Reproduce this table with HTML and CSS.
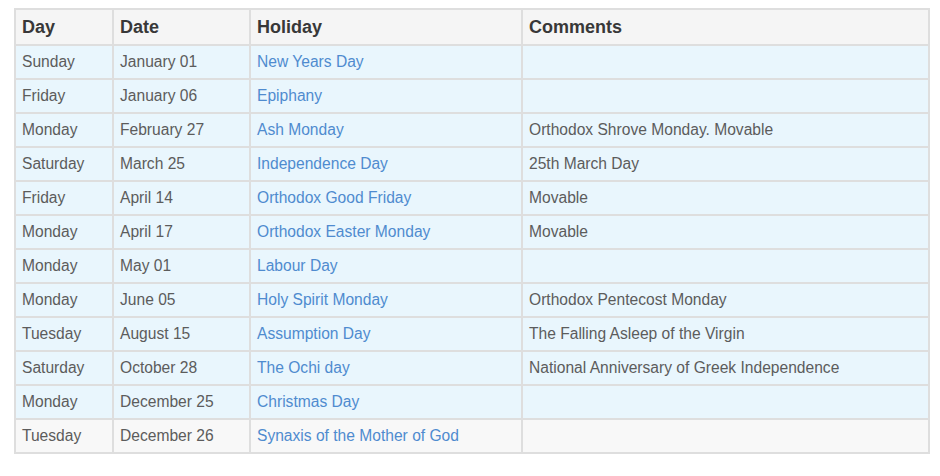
FILE: index.html
```html
<!DOCTYPE html>
<html>
<head>
<meta charset="utf-8">
<link rel="stylesheet" href="styles.css">
</head>
<body>
<table class="holidays">
  <colgroup>
    <col class="c-day"><col class="c-date"><col class="c-hol"><col class="c-com">
  </colgroup>
  <thead>
    <tr><th>Day</th><th>Date</th><th>Holiday</th><th>Comments</th></tr>
  </thead>
  <tbody>
    <tr><td>Sunday</td><td>January 01</td><td><a href="#">New Years Day</a></td><td></td></tr>
    <tr><td>Friday</td><td>January 06</td><td><a href="#">Epiphany</a></td><td></td></tr>
    <tr><td>Monday</td><td>February 27</td><td><a href="#">Ash Monday</a></td><td>Orthodox Shrove Monday. Movable</td></tr>
    <tr><td>Saturday</td><td>March 25</td><td><a href="#">Independence Day</a></td><td>25th March Day</td></tr>
    <tr><td>Friday</td><td>April 14</td><td><a href="#">Orthodox Good Friday</a></td><td>Movable</td></tr>
    <tr><td>Monday</td><td>April 17</td><td><a href="#">Orthodox Easter Monday</a></td><td>Movable</td></tr>
    <tr><td>Monday</td><td>May 01</td><td><a href="#">Labour Day</a></td><td></td></tr>
    <tr><td>Monday</td><td>June 05</td><td><a href="#">Holy Spirit Monday</a></td><td>Orthodox Pentecost Monday</td></tr>
    <tr><td>Tuesday</td><td>August 15</td><td><a href="#">Assumption Day</a></td><td>The Falling Asleep of the Virgin</td></tr>
    <tr><td>Saturday</td><td>October 28</td><td><a href="#">The Ochi day</a></td><td>National Anniversary of Greek Independence</td></tr>
    <tr><td>Monday</td><td>December 25</td><td><a href="#">Christmas Day</a></td><td></td></tr>
    <tr class="past"><td>Tuesday</td><td>December 26</td><td><a href="#">Synaxis of the Mother of God</a></td><td></td></tr>
  </tbody>
</table>
</body>
</html>
```
FILE: styles.css
```css
html, body {
  margin: 0;
  padding: 0;
  background: #ffffff;
}
body {
  padding: 8px 0 0 14px;
  font-family: "Liberation Sans", Arial, sans-serif;
}
.holidays {
  border-collapse: collapse;
  width: 914px;
  table-layout: fixed;
  border: 2px solid #dedede;
}
.c-day { width: 98px; }
.c-date { width: 137px; }
.c-hol { width: 272px; }
.c-com { width: 407px; }
.holidays th,
.holidays td {
  border: 2px solid #dedede;
  height: 34px;
  padding: 0 6px;
  text-align: left;
  vertical-align: middle;
  white-space: nowrap;
  box-sizing: border-box;
}
.holidays th {
  height: 36px;
  background: #f5f5f5;
  color: #383838;
  font-size: 18px;
  font-weight: bold;
}
.holidays td {
  background: #e9f6fd;
  color: #5c5c5c;
  font-size: 15.6px;
}
.holidays tr.past td {
  background: #f8f8f8;
}
.holidays a {
  color: #4f8bcf;
  text-decoration: none;
}
```
